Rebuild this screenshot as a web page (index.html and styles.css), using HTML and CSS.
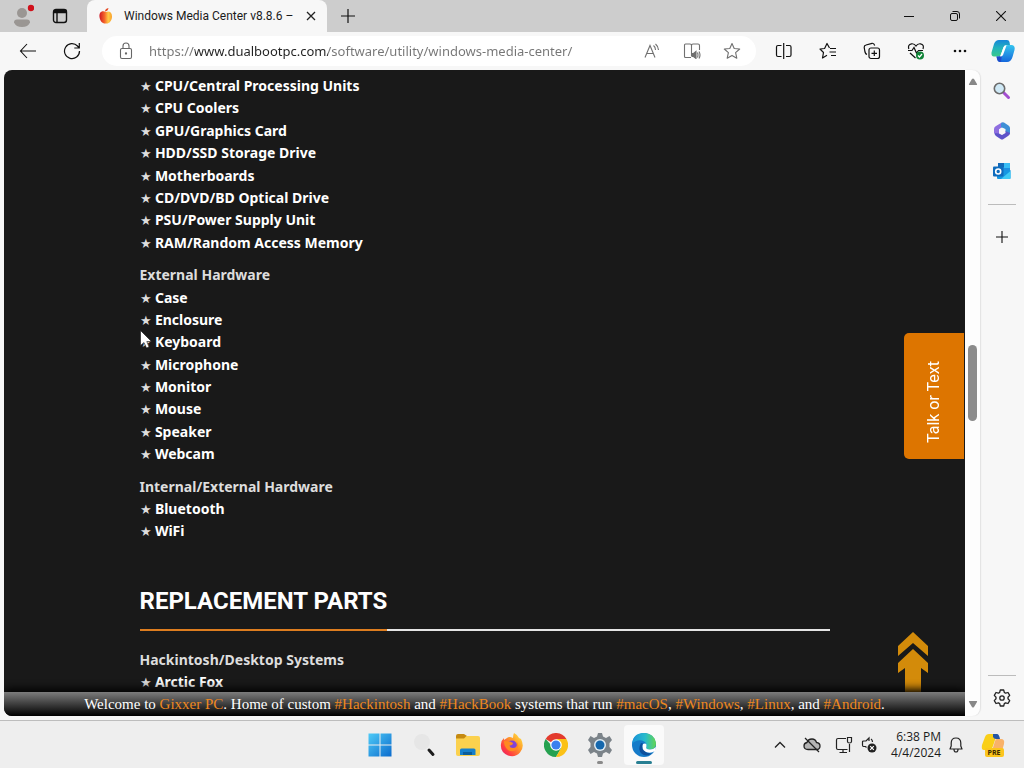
FILE: index.html
```html
<!DOCTYPE html>
<html lang="en">
<head>
<meta charset="utf-8">
<title>Windows Media Center v8.8.6</title>
<link rel="stylesheet" href="styles.css">
</head>
<body>
<div class="desktop">
  <header class="tabstrip">
    <button class="profile" aria-label="Profile">
      <svg width="20" height="24" viewBox="0 0 20 24"><circle cx="8" cy="9" r="5" fill="#9a9693"/><path d="M0 18.500Q0 15.500 3 15.500H13Q16 15.500 16 18.500Q14 23 8 23T0 18.500Z" fill="#9a9693"/><circle cx="17" cy="4" r="3.200" fill="#d0111b"/></svg>
    </button>
    <button class="workspace" aria-label="Tab actions">
      <svg width="16" height="16" viewBox="0 0 16 16" fill="none" stroke="#111" stroke-width="1.400"><rect x="1.500" y="1.500" width="13" height="13" rx="2.500"/><path d="M1.500 3.500H14.500" stroke-width="3.500"/><path d="M5 4V14.500"/></svg>
    </button>
    <div class="tab">
      <svg class="favicon" width="16" height="18" viewBox="0 0 16 18"><defs><linearGradient id="apple"><stop offset="0" stop-color="#cf1824"/><stop offset=".4" stop-color="#f4652a"/><stop offset=".7" stop-color="#ffc845"/><stop offset="1" stop-color="#f9a12c"/></linearGradient></defs><path d="M8 5C4 3 1 5 1.500 10C2 14 4.500 17 8 16.500C11 17 14 14 14 9.500C14 5 11 3.500 8 5Z" fill="url(#apple)"/><path d="M7 4.500Q7 1.500 10.500 1Q10 4 7 4.500Z" fill="#e54821"/></svg>
      <span class="tab-title">Windows Media Center v8.8.6 –</span>
      <button class="tab-close" aria-label="Close tab"><svg width="10" height="10" viewBox="0 0 10 10" stroke="#222" stroke-width="1.300"><path d="M1 1L9 9M9 1L1 9"/></svg></button>
    </div>
    <button class="new-tab" aria-label="New tab"><svg width="14" height="14" viewBox="0 0 14 14" stroke="#111" stroke-width="1.200"><path d="M7 0V14M0 7H14"/></svg></button>
    <div class="window-buttons">
      <button aria-label="Minimize"><svg width="10" height="10" viewBox="0 0 10 10" stroke="#111"><path d="M0 5.500H10"/></svg></button>
      <button aria-label="Restore"><svg width="10" height="10" viewBox="0 0 10 10" stroke="#111" fill="none"><rect x=".5" y="2.500" width="7" height="7" rx="1.500"/><path d="M2.500.5H7Q9.500.5 9.500 3V7.500"/></svg></button>
      <button aria-label="Close"><svg width="10" height="10" viewBox="0 0 10 10" stroke="#111" stroke-width="1.100"><path d="M0 0L10 10M10 0L0 10"/></svg></button>
    </div>
  </header>

  <nav class="toolbar" aria-label="Browser toolbar">
    <button class="tool" aria-label="Back"><svg width="18" height="16" viewBox="0 0 18 16" fill="none" stroke="#111" stroke-width="1.100"><path d="M17 8H1.500M8 1L1.500 8L8 15"/></svg></button>
    <button class="tool" aria-label="Refresh"><svg width="18" height="18" viewBox="0 0 18 18" fill="none" stroke="#111" stroke-width="1.200"><path d="M16.500 9A7.500 7.500 0 1 1 14.500 4L16 5.800M16.300 1V6H11.300"/></svg></button>
    <div class="address">
      <svg width="20" height="18" viewBox="0 0 20 18" fill="none" stroke="#666" stroke-width="1.100"><rect x="4.500" y="6.500" width="11" height="10" rx="1.500"/><path d="M7 6.500V4Q7 1 10 1T13 4V6.500"/><circle cx="10" cy="11.500" r=".6" fill="#666"/></svg>
      <input class="url" type="text" aria-label="Address" spellcheck="false" value="https://www.dualbootpc.com/software/utility/windows-media-center/">
      <button class="inner-tool" aria-label="Read aloud"><svg width="18" height="16" viewBox="0 0 18 16" fill="none" stroke="#707070" stroke-width="1.100"><path d="M2 14.500L7 2.500L12 14.500M3.500 10.500H10.500M10.500 2.500Q12.500 4 12.500 7M12.500 1Q15.500 3.500 15.500 7"/></svg></button>
      <button class="inner-tool" aria-label="Immersive reader"><svg width="18" height="16" viewBox="0 0 18 16" fill="none" stroke="#707070" stroke-width="1.100"><path d="M8 14.500H2.500Q1.500 14.500 1.500 13.500V2Q1.500 1 2.500 1H7Q8.500 1 8.500 2.500V13M8.500 2.500Q8.500 1 10 1H15Q16.500 1 16.500 2.500V7"/><path d="M9 10.500H10.500L13 8.500V15.500L10.500 13.500H9Z" fill="#707070"/><path d="M14.500 9.500Q15.500 12 14.500 14.500M16 8.500Q18 12 16 15.500"/></svg></button>
      <button class="inner-tool" aria-label="Favorite this page"><svg width="18" height="18" viewBox="0 0 18 18" fill="none" stroke="#707070" stroke-width="1.100"><path d="M9 1.500L11.200 6.500L16.700 7L12.600 10.700L13.800 16.200L9 13.400L4.200 16.200L5.400 10.700L1.300 7L6.800 6.500Z" stroke-linejoin="round"/></svg></button>
    </div>
    <button class="tool" aria-label="Split screen"><svg width="18" height="16" viewBox="0 0 18 16" fill="none" stroke="#111" stroke-width="1.200"><path d="M6.500 2.500H3Q1.500 2.500 1.500 4V12Q1.500 13.500 3 13.500H6.500M11 2.500H14.500Q16 2.500 16 4V12Q16 13.500 14.500 13.500H11M8.700 0V16"/></svg></button>
    <button class="tool" aria-label="Favorites"><svg width="18" height="18" viewBox="0 0 18 18" fill="none" stroke="#111" stroke-width="1.200"><path d="M11 6.500H17M10.500 10H17M12 13.500H17M10.500 6L8 1.500L5.600 6.500L1 7L4.500 10.500L3.500 16L8 13.300" stroke-linejoin="round"/></svg></button>
    <button class="tool" aria-label="Collections"><svg width="18" height="18" viewBox="0 0 18 18" fill="none" stroke="#111" stroke-width="1.200"><rect x="6" y="6" width="10.500" height="10.500" rx="2"/><path d="M11.300 8.500V14M8.500 11.300H14M4 12.500Q2.500 12 2 10L1.200 5.500Q1 3.500 3 3L9 1.300Q11 1 11.700 3.500"/></svg></button>
    <button class="tool" aria-label="Browser essentials"><svg width="18" height="18" viewBox="0 0 18 18" fill="none" stroke="#111" stroke-width="1.200"><path d="M1.800 7Q.5 2.500 4.500 1.800Q7.500 1.500 9 4Q10.500 1.500 13.500 1.800Q17.500 2.500 16 7M1 8.500H5L7 5.500L9.500 11L11.500 8.500H16M3 11L8.500 16"/><circle cx="13" cy="13.500" r="4" fill="#118438" stroke="none"/><path d="M11 13.500L12.500 15L15 12" stroke="#fff"/></svg></button>
    <button class="tool" aria-label="Settings and more"><svg width="16" height="4" viewBox="0 0 16 4" fill="#111"><circle cx="3" cy="2" r="1.300"/><circle cx="8" cy="2" r="1.300"/><circle cx="13" cy="2" r="1.300"/></svg></button>
    <button class="tool copilot" aria-label="Copilot"><svg width="24" height="24" viewBox="0 0 24 24"><defs><linearGradient id="cpa" x1="0" y1="0" x2="0" y2="1"><stop offset="0" stop-color="#1686d9"/><stop offset=".5" stop-color="#24b4bb"/><stop offset="1" stop-color="#39c98b"/></linearGradient><linearGradient id="cpb" x1="0" y1="0" x2="0" y2="1"><stop offset="0" stop-color="#35c5ee"/><stop offset="1" stop-color="#1467dc"/></linearGradient></defs><path d="M8 1H16Q18 1 18.500 3L19 6H15Q13 6 12.300 8.500L10 16Q9.500 17.500 7.500 17.500H3Q0 17.500 .500 13.500L3 5Q4.500 1 8 1Z" fill="url(#cpa)"/><path d="M16 23H9Q6.500 23 6 20L5.500 17.500H8Q10 17.500 11 14.500L13.500 8Q14.500 6 17 6H20.500Q24.500 6.500 23.500 11L21.500 18Q20 23 16 23Z" fill="url(#cpb)"/><path d="M5.500 17.500H8Q10 17.500 11 15L10 22.900H9Q6.500 23 5.500 17.500Z" fill="#214bc9"/><path d="M12.500 8.500Q13 6.500 15.500 6.500L12 16Q11.300 17.500 9 17.500Z" fill="#fff"/></svg></button>
  </nav>

  <div class="workarea">
    <div class="page">
      <main class="article">
        <ul class="parts">
          <li><a href="#">CPU/Central Processing Units</a></li>
          <li><a href="#">CPU Coolers</a></li>
          <li><a href="#">GPU/Graphics Card</a></li>
          <li><a href="#">HDD/SSD Storage Drive</a></li>
          <li><a href="#">Motherboards</a></li>
          <li><a href="#">CD/DVD/BD Optical Drive</a></li>
          <li><a href="#">PSU/Power Supply Unit</a></li>
          <li><a href="#">RAM/Random Access Memory</a></li>
        </ul>
        <h3 class="group">External Hardware</h3>
        <ul class="parts">
          <li><a href="#">Case</a></li>
          <li><a href="#">Enclosure</a></li>
          <li><a href="#">Keyboard</a></li>
          <li><a href="#">Microphone</a></li>
          <li><a href="#">Monitor</a></li>
          <li><a href="#">Mouse</a></li>
          <li><a href="#">Speaker</a></li>
          <li><a href="#">Webcam</a></li>
        </ul>
        <h3 class="group">Internal/External Hardware</h3>
        <ul class="parts">
          <li><a href="#">Bluetooth</a></li>
          <li><a href="#">WiFi</a></li>
        </ul>
        <h2 class="section-title"><span>REPLACEMENT PARTS</span></h2>
        <h3 class="group">Hackintosh/Desktop Systems</h3>
        <ul class="parts">
          <li><a href="#">Arctic Fox</a></li>
        </ul>
      </main>
      <button class="talk"><span>Talk or Text</span></button>
      <a class="to-top" href="#" aria-label="Back to top"><svg width="30" height="60" viewBox="0 0 30 60" fill="#d38b0a"><path d="M15 0L30 14V24L15 11L0 24V14Z"/><path d="M15 17L30 31V41L23 36V60H7V36L0 41V31Z"/></svg></a>
      <footer class="welcome">Welcome to <a href="#">Gixxer PC</a>. Home of custom <a href="#">#Hackintosh</a> and <a href="#">#HackBook</a> systems that run <a href="#">#macOS</a>, <a href="#">#Windows</a>, <a href="#">#Linux</a>, and <a href="#">#Android</a>.</footer>
      <svg class="cursor" width="12" height="19" viewBox="0 0 12 19"><path d="M.5.5V15.500L4 12.500L6.500 18L9 17L6.800 11.500H11.500Z" fill="#fff" stroke="#111" stroke-width=".6"/></svg>
    </div>
    <div class="scrollbar">
      <svg width="10" height="8" viewBox="0 0 10 8"><path d="M1 6L4 1Q5 0 6 1L9 6Q9.500 7 8.500 7H1.500Q.5 7 1 6Z" fill="#888"/></svg>
      <div class="track"><div class="thumb"></div></div>
      <svg width="10" height="8" viewBox="0 0 10 8"><path d="M1 2L4 7Q5 8 6 7L9 2Q9.500 1 8.500 1H1.500Q.5 1 1 2Z" fill="#888"/></svg>
    </div>
    <aside class="sidebar">
      <button aria-label="Search"><svg width="18" height="18" viewBox="0 0 18 18"><path d="M10.500 10.500L15.500 15.500" stroke="#a24fd0" stroke-width="3" stroke-linecap="round"/><circle cx="6.500" cy="6.500" r="5.200" fill="#cfe9f6" stroke="#6c6c6c" stroke-width="1.600"/></svg></button>
      <button aria-label="Microsoft 365"><svg width="18" height="18" viewBox="0 0 18 18"><path d="M8 1Q10 0 11 1L8.500 6L6 7.500V12L4.500 13L1 11V7Q1 5 3 4Z" fill="#8f6fe0"/><path d="M8.500 .5H11L15.500 3.500Q17 4.500 17 6V12L12.500 9.500V7L8 5.500V2Z" fill="#3f8fd6"/><path d="M1.500 11L6 11.500L9 13L12.500 11V9L17 11Q17 13 15 14L10.500 17Q9 18 7.500 17L3 14Q1.500 13 1.500 11Z" fill="#5d53c9"/><path d="M9 5.500L12 7.300V10.700L9 12.500L6 10.700V7.300Z" fill="#f7f7f7"/></svg></button>
      <button aria-label="Outlook"><svg width="18" height="18" viewBox="0 0 18 18"><rect x="5" y="1" width="12" height="9" rx="1" fill="#1f8fe0"/><path d="M5 1H11V5H5Z" fill="#1268b8"/><path d="M11 1H16Q17 1 17 2V6H11Z" fill="#37bdf5"/><path d="M4 9L17.500 8V16Q17.500 17 16.500 17H5Q4 17 4 16Z" fill="#1597e2"/><path d="M17.500 9L8 17H16.500Q17.500 17 17.500 16Z" fill="#3ecbf5"/><rect x="0" y="4.500" width="10.500" height="10" rx="1" fill="#0f6cbd"/><circle cx="5.200" cy="9.500" r="2.500" fill="none" stroke="#fff" stroke-width="1.600"/></svg></button>
      <hr>
      <button class="add" aria-label="Customize"><svg width="12" height="12" viewBox="0 0 12 12" stroke="#111" stroke-width="1.100"><path d="M6 0V12M0 6H12"/></svg></button>
      <hr class="lower">
      <button class="gear" aria-label="Settings"><svg width="18" height="18" viewBox="0 0 18 18" fill="none" stroke="#222" stroke-width="1.300" stroke-linejoin="round"><path d="M7.300 1H10.700L11.300 3.400L12.600 4.200L15 3.500L16.700 6.400L15 8.200V9.800L16.700 11.600L15 14.500L12.600 13.800L11.300 14.600L10.700 17H7.300L6.700 14.600L5.400 13.800L3 14.500L1.300 11.600L3 9.800V8.200L1.300 6.400L3 3.500L5.400 4.200L6.700 3.400Z"/><circle cx="9" cy="9" r="2.200"/></svg></button>
    </aside>
  </div>

  <footer class="taskbar">
    <nav class="apps" aria-label="Applications">
      <button aria-label="Start"><svg width="24" height="24" viewBox="0 0 24 24"><defs><linearGradient id="win" gradientUnits="userSpaceOnUse" x1="0" y1="0" x2="24" y2="24"><stop offset="0" stop-color="#50cdf8"/><stop offset="1" stop-color="#0a69cc"/></linearGradient></defs><path d="M.500.500H11.500V11.500H.500ZM12.500.500H23.500V11.500H12.500ZM.500 12.500H11.500V23.500H.500ZM12.500 12.500H23.500V23.500H12.500Z" fill="url(#win)"/></svg></button>
      <button aria-label="Search"><svg width="24" height="24" viewBox="0 0 24 24"><circle cx="10" cy="9" r="8" fill="#e6e6e6"/><path d="M17 17L21 21.500" stroke="#1c1c1c" stroke-width="3" stroke-linecap="round"/></svg></button>
      <button aria-label="File Explorer"><svg width="24" height="24" viewBox="0 0 24 24"><path d="M0 3Q0 1 2 1H8L11 3V8H0Z" fill="#c58a12"/><path d="M0 5.500H8L10.500 3H22Q24 3 24 5V21Q24 23 22 23H2Q0 23 0 21Z" fill="#fbd14e"/><path d="M4 17Q4 15.500 5.500 15.500H18Q19.500 15.500 19.500 17V22H4Z" fill="#1680cb"/><path d="M7 19H16V22H7Z" fill="#0b5d9a"/></svg></button>
      <button aria-label="Firefox"><svg width="24" height="24" viewBox="0 0 24 24"><defs><linearGradient id="fox" x1="1" y1="0" x2="0" y2="1"><stop offset="0" stop-color="#fff04a"/><stop offset=".4" stop-color="#ff9a28"/><stop offset=".75" stop-color="#ff3b43"/><stop offset="1" stop-color="#d91a75"/></linearGradient></defs><path d="M14 0Q18 2 19 5L21 6Q25 14 20 19.500Q15 25 8 22.500Q0 19 1 11Q1.500 7 4 5V7L7 5Q9 3 13 5Q13 2 14 0Z" fill="url(#fox)"/><circle cx="12" cy="12.500" r="5" fill="#8142d6"/><path d="M4 8L10 8.500L13 10Q13 12 9.500 12.500Q10 15 13 15Q17 15 17 11L16 8Q20 12 17 16Q13 20 8 17Q4 14 4 8Z" fill="#ff8a20"/></svg></button>
      <button aria-label="Chrome"><svg width="24" height="24" viewBox="0 0 24 24"><path d="M12 12L1.600 6A12 12 0 0 1 22.400 6Z" fill="#e33b2e"/><path d="M12 12L9 14L1.600 6A12 12 0 0 0 12 24L17.200 15Z" fill="#25a150"/><path d="M12 6H22.400A12 12 0 0 1 12 24L17.200 15Z" fill="#fbc116"/><circle cx="12" cy="12" r="5.800" fill="#fff"/><circle cx="12" cy="12" r="4.600" fill="#3b80ee"/></svg></button>
      <button class="running" aria-label="Settings"><svg width="24" height="24" viewBox="0 0 24 24"><path d="M10 0H14L15 3.500L18 5L21.500 3L24 7L21.500 10V14L24 17L21.500 21L18 19L15 20.500L14 24H10L9 20.500L6 19L2.500 21L0 17L2.500 14V10L0 7L2.500 3L6 5L9 3.500Z" fill="#7b8389"/><circle cx="12" cy="12" r="6" fill="#e1edf5"/><circle cx="12" cy="12" r="4.500" fill="#1467ad"/></svg></button>
      <button class="active" aria-label="Microsoft Edge"><svg width="24" height="24" viewBox="0 0 24 24"><defs><linearGradient id="edge"><stop offset="0" stop-color="#1991d9"/><stop offset=".55" stop-color="#28bbcb"/><stop offset="1" stop-color="#64d64e"/></linearGradient></defs><circle cx="12" cy="12" r="12" fill="#157bc9"/><path d="M0 11Q1 0 12 0Q22 0 24 10Q24 16 18 16.500Q13 16.500 14.500 13Q15 9 10 7.500Q4 6.500 0 11Z" fill="url(#edge)"/><path d="M9 10Q5 17 10 21Q14 24 20 20.500Q15 21 12 17Q9.500 14 11 10.500Z" fill="#0d509d"/><path d="M11 11Q15 9.500 14.500 13Q13 16.500 18 16.500Q21 16.500 24 14L23 18Q19 21 14 19Q9 16 11 11Z" fill="#fff"/></svg></button>
    </nav>
    <div class="tray">
      <button class="chevron" aria-label="Show hidden icons"><svg width="12" height="8" viewBox="0 0 12 8" fill="none" stroke="#222" stroke-width="1.300"><path d="M1 6.500L6 1.500L11 6.500"/></svg></button>
      <button class="cloud" aria-label="OneDrive"><svg width="18" height="16" viewBox="0 0 18 16" fill="none" stroke="#222" stroke-width="1.300"><path d="M5 12.500Q1 12.500 1 9Q1 6 4 5.500Q5 2 9 2Q12.500 2 13.500 5.500Q17 6 17 9Q17 12.500 13.500 12.500Z" fill="#b4b4b4"/><path d="M2 1L16 15"/></svg></button>
      <button class="network" aria-label="Network"><svg width="18" height="18" viewBox="0 0 18 18" fill="none" stroke="#222" stroke-width="1.200"><path d="M11 2.500H3Q1.500 2.500 1.500 4V12Q1.500 13.500 3 13.500H12.500M4.500 16.500H12M8 13.500V16.500M14.500 8V16M12.500 1.500H16.500V5.500Q16.500 7 14.500 7T12.500 5.500Z"/></svg></button>
      <button class="volume" aria-label="Volume"><svg width="18" height="18" viewBox="0 0 18 18" fill="none" stroke="#222" stroke-width="1.200"><path d="M8 5V2L5 5H2.500Q1.500 5 1.500 6V9Q1.500 10.500 2.500 10.500H4.500L5.500 11.500M10 3Q11.500 4 11.500 6"/><circle cx="11" cy="12" r="4.500" fill="#222" stroke="none"/><path d="M9.200 10.200L12.800 13.800M12.800 10.200L9.200 13.800" stroke="#fff"/></svg></button>
      <time class="clock"><span>6:38 PM</span><span>4/4/2024</span></time>
      <button class="bell" aria-label="Notifications"><svg width="16" height="16" viewBox="0 0 16 16" fill="none" stroke="#222" stroke-width="1.200" stroke-linejoin="round"><path d="M2 12H14L12.800 9V6Q12.800 1 8 1T3.200 6V9ZM6 12.500Q6 15 8 15T10 12.500"/></svg></button>
      <button aria-label="Copilot preview"><svg width="24" height="24" viewBox="0 0 24 24"><path d="M8 1H16L12 13Q11 17 7 17H3Q0 17 1 12L4 4Q5 1 8 1Z" fill="#f9cf18"/><path d="M12 1H16Q18 1 19 6H15Q13 6 12 4Z" fill="#2456a6"/><path d="M16 6H20Q24 6 23 11L21 18H11L14 8Q14.500 6 16 6Z" fill="#f9b269"/><rect x="4" y="15" width="19" height="9" rx="2" fill="#fcc51d"/><text x="13" y="22" text-anchor="middle" class="pre">PRE</text></svg></button>
    </div>
  </footer>
</div>
</body>
</html>
```
FILE: styles.css
```css
* { box-sizing: border-box; }

body {
  margin: 0;
  font-family: "Open Sans", "Noto Sans", sans-serif;
  color: #1b1b1b;
}

button {
  display: flex;
  align-items: center;
  justify-content: center;
  padding: 0;
  border: 0;
  background: none;
  font: inherit;
  color: inherit;
}

svg { display: block; flex: none; }

.desktop {
  display: flex;
  flex-direction: column;
  height: 100vh;
  overflow: hidden;
  background: #f7f7f7;
}

/* Tab strip */
.tabstrip {
  display: flex;
  align-items: stretch;
  height: 32px;
  flex: none;
  background: #cdcdcd;
}
.profile { width: 44px; padding: 0 0 0 4px; }
.workspace { width: 32px; }
.tab {
  display: flex;
  align-items: center;
  width: 240px;
  margin-left: 11px;
  padding: 0 10px 0 11px;
  border-radius: 8px 8px 0 0;
  background: #f7f7f7;
}
.tab-title {
  flex: 1;
  margin-left: 10px;
  white-space: nowrap;
  font-family: Roboto, sans-serif;
  font-size: 12px;
  line-height: 16px;
}
.tab-close { width: 12px; margin-left: 8px; }
.new-tab { width: 42px; }
.window-buttons { display: flex; margin-left: auto; }
.window-buttons button { width: 46px; }

/* Toolbar */
.toolbar {
  display: flex;
  align-items: center;
  height: 38px;
  flex: none;
  padding-left: 6px;
}
.tool { width: 44px; height: 32px; }
.toolbar .copilot { width: 42px; }
.address {
  display: flex;
  align-items: center;
  flex: 1;
  min-width: 0;
  height: 30px;
  margin: 0 6px 0 8px;
  padding: 0 4px 0 14px;
  border-radius: 15px;
  background: #fff;
}
.url {
  flex: 1;
  min-width: 0;
  margin-left: 13px;
  padding: 0;
  border: 0;
  outline: 0;
  font-family: "Noto Sans", "Open Sans", sans-serif;
  font-size: 13px;
  line-height: 20px;
  color: transparent;
  background: linear-gradient(to right, #757575 46px, #222 46px, #222 179px, #757575 179px);
  background-clip: text;
}
.inner-tool { width: 40px; height: 28px; }

/* Page viewport */
.workarea {
  display: flex;
  flex: 1;
  min-height: 0;
  padding: 0 0 4px 4px;
}
.page {
  position: relative;
  flex: 1;
  min-width: 0;
  overflow: hidden;
  border-radius: 8px 0 0 8px;
  background: #191919;
}
.article {
  max-width: 690px;
  margin: 0 auto;
  padding-top: 5px;
  font-family: "Noto Sans", "Open Sans", sans-serif;
  font-size: 14px;
  font-weight: 700;
  line-height: 1.6;
}
.parts { margin: 0; padding: 0; list-style: none; }
.parts li::before {
  content: "★ ";
  font-size: 13px;
  font-weight: 400;
  line-height: 1;
  color: #ddd;
}
.parts a { color: #fff; text-decoration: none; }
.group {
  margin: 10px 0 0;
  font-size: 14px;
  color: #ddd;
}
.section-title {
  display: flex;
  margin: 42px 0 18px;
  border-bottom: 2px solid #e4e4e4;
  font-family: Roboto, sans-serif;
  font-size: 24px;
  line-height: 32px;
  font-weight: 700;
  color: #fff;
}
.section-title span {
  margin-bottom: -2px;
  padding-bottom: 12px;
  border-bottom: 2px solid #dd7d1f;
}
.talk {
  position: absolute;
  top: 263px;
  right: 1px;
  width: 60px;
  height: 126px;
  padding-top: 12px;
  border-radius: 5px 0 0 5px;
  background: #dd7500;
  font-family: Roboto, sans-serif;
  font-size: 16px;
  line-height: 20px;
  color: #fff;
}
.talk span { writing-mode: vertical-rl; transform: rotate(180deg); }
.to-top { position: absolute; right: 37px; bottom: 24px; }
.welcome {
  position: absolute;
  left: 0;
  right: 0;
  bottom: 0;
  height: 24px;
  background: linear-gradient(#7c7c7c, #000);
  box-shadow: 0 -3px 8px #000;
  text-align: center;
  white-space: nowrap;
  font-family: "Liberation Serif", serif;
  font-size: 15px;
  line-height: 24px;
  color: #fff;
}
.welcome a { color: #ee8820; text-decoration: none; }
.cursor { position: absolute; left: 136px; top: 260px; }

/* Scrollbar */
.scrollbar {
  display: flex;
  flex-direction: column;
  align-items: center;
  width: 15px;
  flex: none;
  padding: 8px 0;
  border-radius: 0 8px 8px 0;
  background: #fdfdfd;
  box-shadow: 1px 0 1px #e2e2e2;
}
.track { flex: 1; width: 9px; padding-top: 259px; }
.thumb { height: 76px; border-radius: 5px; background: #8b8b8b; }

/* Browser sidebar */
.sidebar {
  display: flex;
  flex-direction: column;
  align-items: center;
  width: 44px;
  flex: none;
  padding-top: 1px;
}
.sidebar button { width: 40px; height: 40px; }
.sidebar hr {
  width: 28px;
  height: 1px;
  margin: 13px 0 0;
  border: 0;
  background: #bcbcbc;
}
.sidebar .add { margin-top: 12px; }
.sidebar .lower { margin-top: auto; }
.sidebar .gear { height: 36px; margin-top: 4px; }

/* Taskbar */
.taskbar {
  display: grid;
  grid-template-columns: 1fr auto 1fr;
  align-items: center;
  height: 48px;
  flex: none;
  border-top: 1px solid #bdbdbd;
  background: #eee;
}
.apps { display: flex; gap: 4px; grid-column: 2; }
.apps button {
  position: relative;
  width: 40px;
  height: 40px;
  border-radius: 4px;
}
.apps .active { background: #fafafa; }
.apps .running::after,
.apps .active::after {
  content: "";
  position: absolute;
  bottom: 1px;
  width: 6px;
  height: 3px;
  border-radius: 2px;
  background: #8a8a8a;
}
.apps .active::after { width: 16px; background: #287f92; }
.tray {
  display: flex;
  align-items: center;
  justify-content: flex-end;
  padding-right: 19px;
}
.cloud { margin-left: 17px; }
.network { margin-left: 14px; }
.volume { margin-left: 8px; }
.clock {
  display: flex;
  flex-direction: column;
  align-items: flex-end;
  margin-left: 12px;
  font-size: 12px;
  line-height: 16px;
}
.bell { margin: 0 17px 0 7px; }
.pre { font: 700 7px "Open Sans", sans-serif; fill: #3a2a00; }
```
